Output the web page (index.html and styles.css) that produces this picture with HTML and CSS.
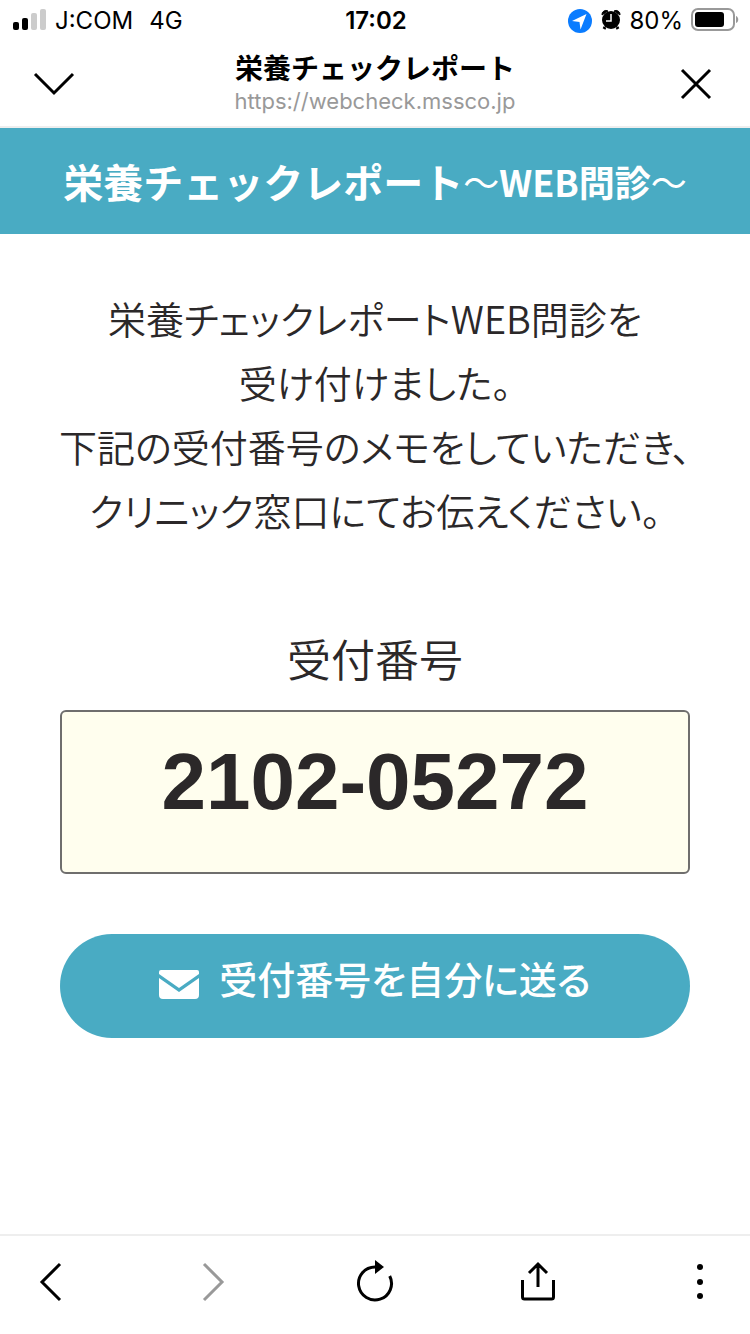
FILE: index.html
```html
<!DOCTYPE html>
<html lang="ja">

<head>
    <meta charset="UTF-8">
    <meta name="viewport" content="width=device-width">
    <title>栄養チェックレポート</title>
    <link rel="stylesheet" href="styles.css">
</head>

<body>

    <div class="status">
        <div class="status-left">
            <svg class="signal" width="34" height="22" viewBox="0 0 34 22">
                <rect x="0" y="13" width="6" height="8" rx="2" />
                <rect x="9" y="9" width="6" height="12" rx="2" />
                <rect class="off" x="18" y="4" width="6" height="17" rx="2" />
                <rect class="off" x="27" y="0" width="6" height="21" rx="2" />
            </svg>
            <span class="carrier">J:COM</span>
            <span>4G</span>
        </div>
        <span class="time">17:02</span>
        <div class="status-right">
            <svg width="26" height="26" viewBox="0 0 26 26">
                <circle cx="13" cy="14" r="12" fill="#0a7cff" />
                <path d="M19.500 7L5 14l7.500 1 1 7.500z" fill="#fff" />
            </svg>
            <svg width="20" height="22" viewBox="0 0 20 22">
                <path d="M4 18l-1 2M16 18l1 2" stroke="#000" stroke-width="3" />
                <path d="M1 6a4 4 0 0 1 6-4zM19 6a4 4 0 0 0-6-4z" stroke="#000" stroke-width="1" stroke-linejoin="round" />
                <circle cx="10" cy="11" r="9" />
                <path d="M10 5v7H5" fill="none" stroke="#fff" stroke-width="1.500" />
            </svg>
            <span>80%</span>
            <svg class="battery" width="48" height="24" viewBox="0 0 48 24">
                <rect x="1" y="1" width="42" height="21" rx="6" fill="none" stroke="#999" stroke-width="2" />
                <rect x="4" y="4" width="29" height="15" rx="3" />
                <path d="M45 8c3 1 3 6 0 7z" fill="#999" />
            </svg>
        </div>
    </div>

    <header class="nav">
        <button class="icon" aria-label="閉じる">
            <svg width="44" height="44" viewBox="0 0 44 44">
                <path d="M3 13l19 19 19-19" />
            </svg>
        </button>
        <div class="nav-title">
            <p class="page-name">栄養チェックレポート</p>
            <p class="url">https://webcheck.mssco.jp</p>
        </div>
        <button class="icon" aria-label="終了">
            <svg width="44" height="44" viewBox="0 0 44 44">
                <path d="M8 9l28 28M36 9L8 37" />
            </svg>
        </button>
    </header>

    <h1 class="banner">栄養チェックレポート<span class="banner-sub"><span class="wave">～</span>WEB問診<span class="wave">～</span></span></h1>

    <main class="content">
        <p class="message">
            栄養チェックレポートWEB問診を<br>
            受け付けました。<br>
            下記の受付番号のメモをしていただき、<br>
            クリニック窓口にてお伝えください。
        </p>

        <h2 class="label">受付番号</h2>
        <p class="number">2102-05272</p>

        <button class="send">
            <svg width="40" height="32" viewBox="0 0 40 32">
                <path d="M2 0h36a2 2 0 0 1 2 2v2L20 18 0 4V2a2 2 0 0 1 2-2z" />
                <path d="M0 8l20 14L40 8v17a4 4 0 0 1-4 4H4a4 4 0 0 1-4-4z" />
            </svg>
            <span>受付番号を自分に送る</span>
        </button>
    </main>

    <footer class="toolbar">
        <button class="icon" aria-label="戻る">
            <svg width="44" height="44" viewBox="0 0 44 44">
                <path d="M32 4L14 22l18 18" />
            </svg>
        </button>
        <button class="icon" aria-label="進む" disabled>
            <svg width="44" height="44" viewBox="0 0 44 44">
                <path d="M13 4l18 18-18 18" />
            </svg>
        </button>
        <button class="icon" aria-label="再読み込み">
            <svg width="44" height="44" viewBox="0 0 44 44">
                <path d="M22 7a16.500 16.500 0 1 0 14.700 9" />
                <path class="fill" d="M22 0l9 7-9 7z" />
            </svg>
        </button>
        <button class="icon" aria-label="共有">
            <svg width="44" height="44" viewBox="0 0 44 44">
                <path d="M6.500 20v17a2 2 0 0 0 2 2h27a2 2 0 0 0 2-2V20M22 27V5M13 13l9-9 9 9" />
            </svg>
        </button>
        <button class="icon" aria-label="メニュー">
            <svg width="44" height="44" viewBox="0 0 44 44">
                <g class="fill">
                    <circle cx="22" cy="7" r="3" />
                    <circle cx="22" cy="22" r="3" />
                    <circle cx="22" cy="36" r="3" />
                </g>
            </svg>
        </button>
    </footer>

</body>

</html>
```
FILE: styles.css
```css
* {
    box-sizing: border-box;
}

body {
    margin: 0;
    min-height: 100vh;
    display: flex;
    flex-direction: column;
    background-color: #fff;
    color: #2b2829;
    font-family: "Liberation Sans", "Noto Sans CJK JP", sans-serif;
}

p,
h1,
h2 {
    margin: 0;
}

button {
    border: none;
    padding: 0;
    background: none;
    font-family: inherit;
    cursor: pointer;
}

svg {
    display: block;
    flex: none;
}

/* status bar */

.status {
    display: grid;
    grid-template-columns: 1fr auto 1fr;
    align-items: center;
    height: 40px;
    padding: 0 11px 0 13px;
    color: #000;
    font-family: Inter, sans-serif;
    font-size: 24px;
}

.status-left,
.status-right {
    display: flex;
    align-items: center;
}

.status-left {
    gap: 8px;
}

.carrier {
    margin-right: 8px;
}

.signal .off {
    fill: #ccc;
}

.time {
    font-weight: 600;
}

.status-right {
    justify-content: flex-end;
    gap: 8px;
}

/* browser header */

.nav {
    display: flex;
    align-items: center;
    justify-content: space-between;
    height: 88px;
    padding: 0 32px;
    border-bottom: 2px solid #eee;
    color: #000;
}

.nav-title {
    text-align: center;
}

.page-name {
    font-family: "Noto Sans CJK JP", sans-serif;
    font-size: 28px;
    font-weight: bold;
    line-height: 36px;
}

.url {
    color: #999;
    font-family: Inter, sans-serif;
    font-size: 22px;
    line-height: 32px;
}

.icon svg {
    fill: none;
    stroke: #000;
    stroke-width: 3;
}

.icon .fill {
    fill: #000;
    stroke: none;
}

.icon:disabled svg {
    stroke: #999;
}

/* page */

.banner {
    display: flex;
    align-items: center;
    justify-content: center;
    height: 106px;
    background-color: #49abc3;
    color: #fff;
    font-family: "Noto Sans CJK JP", sans-serif;
    font-size: 40px;
    line-height: 64px;
    white-space: nowrap;
}

.banner-sub {
    font-size: 36px;
}

.wave {
    font-weight: normal;
}

.content {
    flex: 1;
    padding: 52px 60px;
    text-align: center;
}

.message {
    margin: 0 -20px;
    font-family: "Noto Sans CJK JP", sans-serif;
    font-size: 38px;
    font-weight: 350;
    line-height: 64px;
    font-feature-settings: "palt";
}

.label {
    margin-top: 88px;
    font-size: 44px;
    font-weight: 350;
    line-height: 64px;
}

.number {
    margin-top: 16px;
    padding: 22px 0 42px;
    border: 2px solid #6f6e6d;
    border-radius: 6px;
    background-color: #fffeee;
    font-size: 80px;
    font-weight: bold;
    line-height: 96px;
}

.send {
    display: flex;
    align-items: center;
    justify-content: center;
    gap: 20px;
    width: 100%;
    height: 104px;
    margin-top: 60px;
    border-radius: 52px;
    background-color: #49abc3;
    color: #fff;
    font-family: "Noto Sans CJK JP", sans-serif;
    font-size: 38px;
    font-weight: 500;
    line-height: 64px;
    font-feature-settings: "palt";
}

.send span {
    padding-bottom: 16px;
}

.send svg {
    fill: #fff;
}

/* bottom toolbar */

.toolbar {
    display: flex;
    align-items: center;
    justify-content: space-between;
    height: 100px;
    padding: 0 28px 6px;
    border-top: 2px solid #eee;
}
```
